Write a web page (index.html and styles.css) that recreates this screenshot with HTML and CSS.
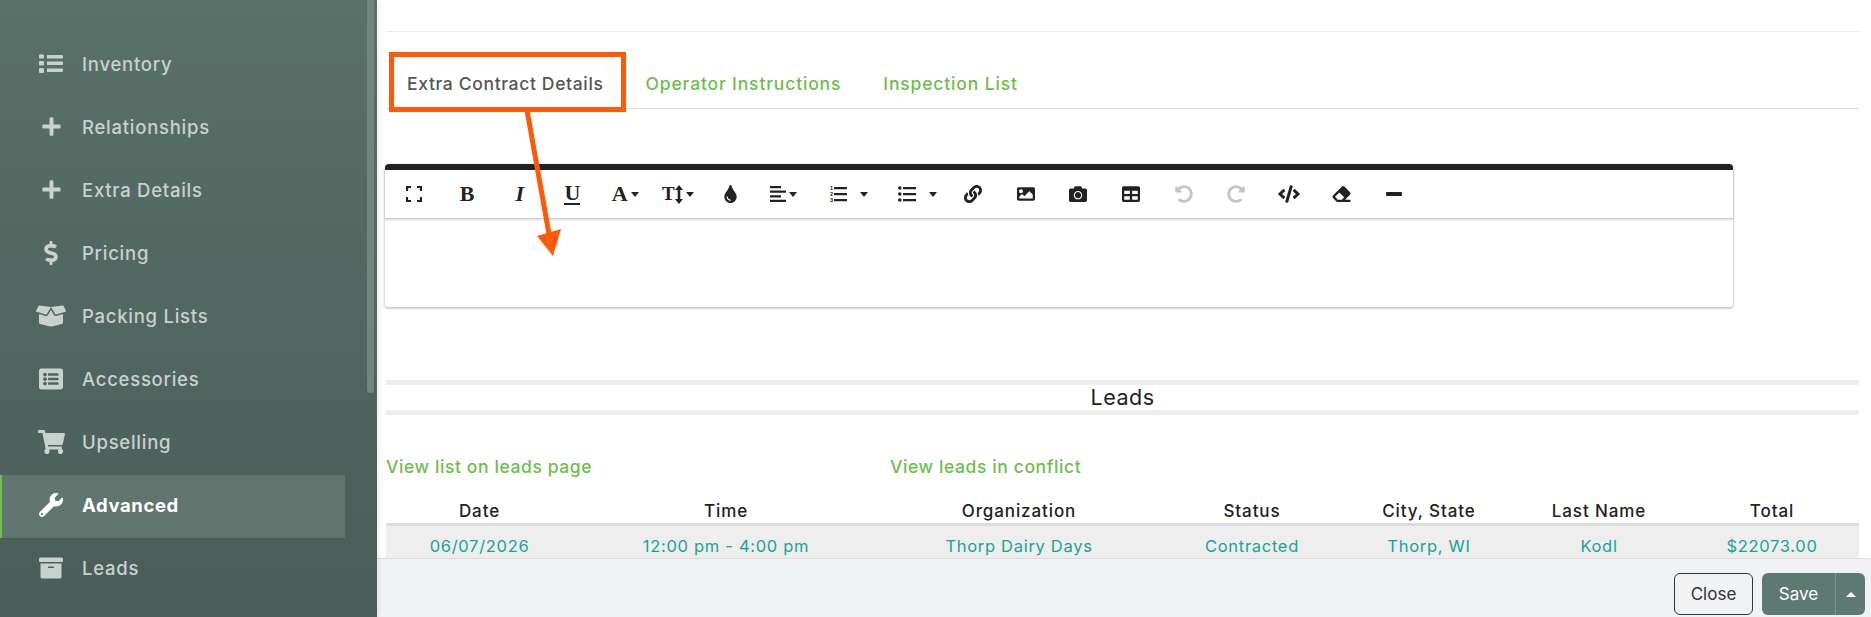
FILE: index.html
```html
<!doctype html>
<html lang="en">
<head>
	<meta charset="utf-8">
	<title>Extra Contract Details</title>
	<link rel="stylesheet" href="styles.css">
</head>
<body>
<div class="app">

	<!-- left menu -->
	<aside class="sidebar">
		<nav class="menu">
			<a class="menu-item" href="#"><span class="menu-icon"><svg width="24" height="19" viewBox="0 0 24 19"><path d="M0 1.5Q0 .5 1 .5h3q1 0 1 1v2q0 1-1 1H1q-1 0-1-1zM0 8Q0 7 1 7h3q1 0 1 1v2.500q0 1-1 1H1q-1 0-1-1zM0 15q0-1 1-1h3q1 0 1 1v3q0 1-1 1H1q-1 0-1-1zM8 1h15q1 0 1 1v1.500q0 1-1 1H8zM8 7.500h15q1 0 1 1V10q0 1-1 1H8zM8 14.500h15q1 0 1 1V17q0 1-1 1H8z"/></svg></span>Inventory</a>
			<a class="menu-item" href="#"><span class="menu-icon"><svg width="21" height="21" viewBox="0 0 448 512"><path d="M416 208H272V64c0-17.670-14.330-32-32-32h-32c-17.670 0-32 14.330-32 32v144H32c-17.670 0-32 14.330-32 32v32c0 17.670 14.330 32 32 32h144v144c0 17.670 14.330 32 32 32h32c17.670 0 32-14.330 32-32V304h144c17.670 0 32-14.330 32-32v-32c0-17.670-14.330-32-32-32z"/></svg></span>Relationships</a>
			<a class="menu-item" href="#"><span class="menu-icon"><svg width="21" height="21" viewBox="0 0 448 512"><path d="M416 208H272V64c0-17.670-14.330-32-32-32h-32c-17.670 0-32 14.330-32 32v144H32c-17.670 0-32 14.330-32 32v32c0 17.670 14.330 32 32 32h144v144c0 17.670 14.330 32 32 32h32c17.670 0 32-14.330 32-32V304h144c17.670 0 32-14.330 32-32v-32c0-17.670-14.330-32-32-32z"/></svg></span>Extra Details</a>
			<a class="menu-item" href="#"><span class="menu-icon"><svg width="14" height="24" viewBox="0 0 288 512"><path d="M209.200 233.400l-108-31.600C88.700 198.200 80 186.500 80 173.500c0-16.300 13.200-29.500 29.500-29.500h66.300c12.200 0 24.200 3.700 34.200 10.500 6.100 4.100 14.300 3.100 19.500-2l34.800-34c7.100-6.900 6.100-18.400-1.800-24.500C238 74.800 207.400 64.100 176 64V16c0-8.800-7.200-16-16-16h-32c-8.800 0-16 7.200-16 16v48h-2.500C45.800 64-5.400 118.700.5 183.600c4.200 46.100 39.400 83.600 83.800 96.600l102.500 30c12.500 3.700 21.200 15.300 21.200 28.300 0 16.300-13.200 29.500-29.500 29.500h-66.300C100 368 88 364.300 78 357.500c-6.100-4.100-14.300-3.100-19.500 2l-34.800 34c-7.100 6.900-6.100 18.400 1.800 24.500 24.500 19.200 55.100 29.900 86.500 30v48c0 8.800 7.200 16 16 16h32c8.800 0 16-7.200 16-16v-48.200c46.600-.9 90.300-28.600 105.700-72.700 21.500-61.600-14.600-124.800-72.500-141.700z"/></svg></span>Pricing</a>
			<a class="menu-item" href="#"><span class="menu-icon"><svg width="30" height="24" viewBox="0 0 640 512"><path d="M425.700 256c-16.900 0-32.800-9-41.400-23.400L320 126l-64.200 106.600c-8.700 14.500-24.600 23.500-41.500 23.500-4.500 0-9-.6-13.300-1.900L64 215v178c0 14.700 10 27.500 24.200 31l216.200 54.100c10.200 2.500 20.900 2.500 31 0L551.800 424c14.200-3.600 24.200-16.400 24.200-31V215l-137 39.100c-4.300 1.300-8.800 1.900-13.300 1.900zm212.600-112.200L586.800 41c-3.100-6.200-9.800-9.800-16.700-8.900L320 64l91.700 152.100c3.800 6.300 11.400 9.300 18.500 7.300l197.900-56.500c9.900-2.900 14.700-13.900 10.200-23.100zM53.200 41L1.700 143.800c-4.600 9.200.3 20.200 10.100 23l197.900 56.500c7.100 2 14.700-1 18.500-7.300L320 64 69.800 32.100c-6.900-.8-13.500 2.700-16.600 8.900z"/></svg></span>Packing Lists</a>
			<a class="menu-item" href="#"><span class="menu-icon"><svg width="24" height="24" viewBox="0 0 512 512"><path d="M464 480H48c-26.510 0-48-21.490-48-48V80c0-26.510 21.490-48 48-48h416c26.510 0 48 21.490 48 48v352c0 26.510-21.490 48-48 48zM128 120c-22.091 0-40 17.909-40 40s17.909 40 40 40 40-17.909 40-40-17.909-40-40-40zm0 96c-22.091 0-40 17.909-40 40s17.909 40 40 40 40-17.909 40-40-17.909-40-40-40zm0 96c-22.091 0-40 17.909-40 40s17.909 40 40 40 40-17.909 40-40-17.909-40-40-40zm288-136v-32c0-6.627-5.373-12-12-12H204c-6.627 0-12 5.373-12 12v32c0 6.627 5.373 12 12 12h200c6.627 0 12-5.373 12-12zm0 96v-32c0-6.627-5.373-12-12-12H204c-6.627 0-12 5.373-12 12v32c0 6.627 5.373 12 12 12h200c6.627 0 12-5.373 12-12zm0 96v-32c0-6.627-5.373-12-12-12H204c-6.627 0-12 5.373-12 12v32c0 6.627 5.373 12 12 12h200c6.627 0 12-5.373 12-12z"/></svg></span>Accessories</a>
			<a class="menu-item" href="#"><span class="menu-icon"><svg width="27" height="24" viewBox="0 0 576 512"><path d="M528.120 301.319l47.273-208C578.806 78.301 567.391 64 551.990 64H159.208l-9.166-44.810C147.758 8.021 137.930 0 126.529 0H24C10.745 0 0 10.745 0 24v16c0 13.255 10.745 24 24 24h69.883l70.248 343.435C147.325 417.100 136 435.222 136 456c0 30.928 25.072 56 56 56s56-25.072 56-56c0-15.674-6.447-29.835-16.824-40h209.647C430.447 426.165 424 440.326 424 456c0 30.928 25.072 56 56 56s56-25.072 56-56c0-22.172-12.888-41.332-31.579-50.405l5.517-24.276c3.413-15.018-8.002-29.319-23.403-29.319H218.117l-6.545-32h293.145c11.206 0 20.920-7.754 23.403-18.681z"/></svg></span>Upselling</a>
			<a class="menu-item active" href="#"><span class="menu-icon"><svg width="24" height="24" viewBox="0 0 512 512"><path d="M507.730 109.100c-2.240-9.030-13.540-12.090-20.120-5.510l-74.360 74.360-67.880-11.310-11.310-67.880 74.360-74.360c6.620-6.620 3.430-17.900-5.660-20.160-47.380-11.740-99.550.91-136.580 37.930-39.640 39.640-50.550 97.100-34.050 147.200L18.740 402.760c-24.990 24.990-24.990 65.510 0 90.500 24.990 24.990 65.510 24.990 90.500 0l213.210-213.210c50.120 16.710 107.470 5.680 147.370-34.220 37.070-37.070 49.700-89.320 37.910-136.730zM64 472c-13.250 0-24-10.750-24-24 0-13.260 10.750-24 24-24s24 10.740 24 24c0 13.250-10.750 24-24 24z"/></svg></span>Advanced</a>
			<a class="menu-item" href="#"><span class="menu-icon"><svg width="24" height="24" viewBox="0 0 512 512"><path d="M32 448c0 17.700 14.300 32 32 32h384c17.700 0 32-14.300 32-32V160H32v288zm160-212c0-6.600 5.400-12 12-12h104c6.600 0 12 5.400 12 12v8c0 6.600-5.400 12-12 12H204c-6.600 0-12-5.400-12-12v-8zM480 32H32C14.300 32 0 46.300 0 64v48c0 8.800 7.200 16 16 16h480c8.800 0 16-7.200 16-16V64c0-17.700-14.300-32-32-32z"/></svg></span>Leads</a>
		</nav>
		<div class="scroll-thumb"></div>
	</aside>

	<div class="main">
		<div class="content">
			<div class="top-rule"></div>

			<div class="tabs">
				<a class="tab active" href="#">Extra Contract Details</a>
				<a class="tab" href="#">Operator Instructions</a>
				<a class="tab" href="#">Inspection List</a>
			</div>

			<!-- editor -->
			<div class="editor">
				<div class="toolbar">
					<span class="tool"><svg width="16" height="16" viewBox="0 0 16 16"><path d="M1 5V1h4M11 1h4v4M15 11v4h-4M5 15H1v-4" fill="none" stroke="currentColor" stroke-width="2.200"/></svg></span>
					<span class="tool glyph">B</span>
					<span class="tool glyph slant">I</span>
					<span class="tool glyph"><span class="under">U</span></span>
					<span class="tool glyph">A<i class="caret"></i></span>
					<span class="tool glyph small">T<svg width="8" height="19" viewBox="0 0 8 19"><path d="M4 0l4 5H5.300v9H8l-4 5-4-5h2.700V5H0z"/></svg><i class="caret"></i></span>
					<span class="tool"><svg width="13" height="18" viewBox="0 0 352 512"><path d="M205.220 22.090c-7.940-28.780-49.440-30.120-58.440 0C100.010 179.850 0 222.720 0 333.910 0 432.350 78.720 512 176 512s176-79.650 176-178.090c0-111.750-99.790-153.340-146.780-311.820zM176 448c-61.750 0-112-50.250-112-112 0-8.840 7.160-16 16-16s16 7.160 16 16c0 44.110 35.890 80 80 80 8.840 0 16 7.160 16 16s-7.160 16-16 16z"/></svg></span>
					<span class="tool"><svg width="16" height="16" viewBox="0 0 16 16"><path d="M0 0h11v2.200H0zM0 4.600h16v2.200H0zM0 9.200h11v2.200H0zM0 13.800h16V16H0z"/></svg><i class="caret"></i></span>
					<span class="tool wide-ol"><span class="nums">1<br>2<br>3</span><svg width="13" height="16" viewBox="0 0 13 16"><path d="M0 1h13v2.200H0zM0 7h13v2.200H0zM0 13h13v2.200H0z"/></svg><i class="caret gap"></i></span>
					<span class="tool wide-ul"><svg width="18" height="16" viewBox="0 0 18 16"><circle cx="1.800" cy="2" r="1.800"/><circle cx="1.800" cy="8" r="1.800"/><circle cx="1.800" cy="14" r="1.800"/><path d="M5 1h13v2.200H5zM5 7h13v2.200H5zM5 13h13v2.200H5z"/></svg><i class="caret gap"></i></span>
					<span class="tool"><svg width="18" height="18" viewBox="0 0 512 512"><path d="M326.612 185.391c59.747 59.809 58.927 155.698.36 214.590-.11.12-.24.25-.36.37l-67.200 67.200c-59.270 59.270-155.699 59.262-214.960 0-59.270-59.260-59.270-155.700 0-214.960l37.106-37.106c9.840-9.840 26.786-3.300 27.294 10.606.648 17.722 3.826 35.527 9.690 52.721 1.986 5.822.567 12.262-3.783 16.612l-13.087 13.087c-28.026 28.026-28.905 73.660-1.155 101.960 28.024 28.579 74.086 28.749 102.325.51l67.200-67.190c28.191-28.191 28.073-73.757 0-101.830-3.701-3.694-7.429-6.564-10.341-8.569a16.037 16.037 0 0 1-6.947-12.606c-.396-10.567 3.348-21.456 11.698-29.806l21.054-21.055c5.521-5.521 14.182-6.199 20.584-1.731a152.482 152.482 0 0 1 20.522 17.197zM467.547 44.449c-59.261-59.262-155.690-59.270-214.960 0l-67.200 67.200c-.12.12-.25.25-.36.37-58.566 58.892-59.387 154.781.36 214.590a152.454 152.454 0 0 0 20.521 17.196c6.402 4.468 15.064 3.789 20.584-1.731l21.054-21.055c8.350-8.350 12.094-19.239 11.698-29.806a16.037 16.037 0 0 0-6.947-12.606c-2.912-2.005-6.640-4.875-10.341-8.569-28.073-28.073-28.191-73.639 0-101.830l67.200-67.190c28.239-28.239 74.300-28.069 102.325.51 27.750 28.300 26.872 73.934-1.155 101.960l-13.087 13.087c-4.350 4.350-5.769 10.790-3.783 16.612 5.864 17.194 9.042 34.999 9.690 52.721.509 13.906 17.454 20.446 27.294 10.606l37.106-37.106c59.271-59.259 59.271-155.699.001-214.959z"/></svg></span>
					<span class="tool"><svg width="18" height="18" viewBox="0 0 512 512"><path d="M464 448H48c-26.510 0-48-21.490-48-48V112c0-26.510 21.490-48 48-48h416c26.510 0 48 21.490 48 48v288c0 26.510-21.490 48-48 48zM112 120c-30.928 0-56 25.072-56 56s25.072 56 56 56 56-25.072 56-56-25.072-56-56-56zM64 384h384V272l-87.515-87.515c-4.686-4.686-12.284-4.686-16.971 0L208 320l-55.515-55.515c-4.686-4.686-12.284-4.686-16.971 0L64 336v48z"/></svg></span>
					<span class="tool"><svg width="18" height="18" viewBox="0 0 512 512"><path d="M512 144v288c0 26.500-21.500 48-48 48H48c-26.500 0-48-21.500-48-48V144c0-26.500 21.500-48 48-48h88l12.300-32.900c7-18.700 24.900-31.100 44.900-31.100h125.500c20 0 37.900 12.400 44.900 31.100L376 96h88c26.500 0 48 21.500 48 48zM376 288c0-66.200-53.800-120-120-120s-120 53.800-120 120 53.800 120 120 120 120-53.800 120-120zm-32 0c0 48.500-39.500 88-88 88s-88-39.500-88-88 39.500-88 88-88 88 39.500 88 88z"/></svg></span>
					<span class="tool"><svg width="18" height="18" viewBox="0 0 512 512"><path d="M464 32H48C21.490 32 0 53.490 0 80v352c0 26.510 21.490 48 48 48h416c26.510 0 48-21.490 48-48V80c0-26.510-21.490-48-48-48zM224 416H64v-96h160v96zm0-160H64v-96h160v96zm224 160H288v-96h160v96zm0-160H288v-96h160v96z"/></svg></span>
					<span class="tool off"><svg width="18" height="18" viewBox="0 0 512 512"><path d="M255.545 8c-66.269.119-126.438 26.233-170.860 68.685L48.971 40.971C33.851 25.851 8 36.559 8 57.941V192c0 13.255 10.745 24 24 24h134.059c21.382 0 32.090-25.851 16.971-40.971l-41.750-41.750c30.864-28.899 70.801-44.907 113.230-45.273 92.398-.798 170.283 73.977 169.484 169.442C423.236 348.009 349.816 424 256 424c-41.127 0-79.997-14.678-110.630-41.556-4.743-4.161-11.906-3.908-16.368.553L89.384 422.615c-4.868 4.868-4.628 12.805.482 17.419C133.798 479.702 192.182 504 256 504c136.966 0 247.999-111.033 248-247.998C504.001 119.193 392.354 7.755 255.545 8z"/></svg></span>
					<span class="tool off"><svg class="flip" width="18" height="18" viewBox="0 0 512 512"><path d="M255.545 8c-66.269.119-126.438 26.233-170.860 68.685L48.971 40.971C33.851 25.851 8 36.559 8 57.941V192c0 13.255 10.745 24 24 24h134.059c21.382 0 32.090-25.851 16.971-40.971l-41.750-41.750c30.864-28.899 70.801-44.907 113.230-45.273 92.398-.798 170.283 73.977 169.484 169.442C423.236 348.009 349.816 424 256 424c-41.127 0-79.997-14.678-110.630-41.556-4.743-4.161-11.906-3.908-16.368.553L89.384 422.615c-4.868 4.868-4.628 12.805.482 17.419C133.798 479.702 192.182 504 256 504c136.966 0 247.999-111.033 248-247.998C504.001 119.193 392.354 7.755 255.545 8z"/></svg></span>
					<span class="tool"><svg width="22" height="18" viewBox="0 0 640 512"><path d="M278.900 511.500l-61-17.700c-6.400-1.800-10-8.500-8.200-14.900L346.200 8.700c1.800-6.400 8.500-10 14.900-8.200l61 17.700c6.400 1.800 10 8.500 8.200 14.900L293.800 503.300c-1.900 6.400-8.500 10.100-14.900 8.200zm-114-112.200l43.500-46.400c4.600-4.900 4.300-12.700-.8-17.200L117 256l90.600-79.700c5.100-4.500 5.500-12.300.8-17.200l-43.500-46.400c-4.500-4.800-12.100-5.100-17-.5L3.800 247.200c-5.100 4.700-5.100 12.800 0 17.500l144.100 135.100c4.900 4.600 12.500 4.400 17-.5zm327.200.6l144.100-135.100c5.100-4.700 5.100-12.800 0-17.500L492.100 112.100c-4.800-4.500-12.400-4.300-17 .5L431.600 159c-4.600 4.900-4.300 12.700.8 17.200L523 256l-90.600 79.700c-5.100 4.500-5.500 12.300-.8 17.200l43.500 46.400c4.500 4.900 12.100 5.100 17 .6z"/></svg></span>
					<span class="tool"><svg width="19" height="18" viewBox="0 0 512 512"><path d="M497.941 273.941c18.745-18.745 18.745-49.137 0-67.882l-160-160c-18.745-18.745-49.136-18.746-67.883 0l-256 256c-18.745 18.745-18.745 49.137 0 67.882l96 96A48.004 48.004 0 0 0 144 480h356c6.627 0 12-5.373 12-12v-40c0-6.627-5.373-12-12-12H355.883l142.058-142.059zm-302.627-62.627l137.373 137.373L265.373 416H150.628l-80-80 124.686-124.686z"/></svg></span>
					<span class="tool"><svg width="16" height="4" viewBox="0 0 16 4"><rect width="16" height="4" rx="1"/></svg></span>
				</div>
				<div class="editor-body"></div>
			</div>

			<!-- leads -->
			<h2 class="section-title">Leads</h2>
			<div class="lead-links">
				<a class="lead-link first" href="#">View list on leads page</a>
				<a class="lead-link" href="#">View leads in conflict</a>
			</div>
			<table class="leads">
				<thead>
					<tr>
						<th class="c-date">Date</th>
						<th class="c-time">Time</th>
						<th class="c-org">Organization</th>
						<th class="c-status">Status</th>
						<th class="c-city">City, State</th>
						<th class="c-name">Last Name</th>
						<th class="c-total">Total</th>
					</tr>
				</thead>
				<tbody>
					<tr>
						<td>06/07/2026</td>
						<td>12:00 pm - 4:00 pm</td>
						<td>Thorp Dairy Days</td>
						<td>Contracted</td>
						<td>Thorp, WI</td>
						<td>Kodl</td>
						<td>$22073.00</td>
					</tr>
				</tbody>
			</table>
		</div>

		<div class="footer">
			<button class="btn-close">Close</button>
			<div class="btn-save">
				<span class="save-label">Save</span>
				<span class="save-more"><i class="caret-up"></i></span>
			</div>
		</div>
	</div>
</div>

<!-- orange annotation over the page -->
<div class="mark-box"></div>
<svg class="mark-arrow" width="50" height="150" viewBox="0 0 50 150"><path d="M7 0l22 124" stroke="#ff5a0a" stroke-width="5" fill="none"/><path d="M17 126l24-7-8 27z" fill="#ff5a0a"/></svg>
</body>
</html>
```

FILE: styles.css
```css
*{
	box-sizing: border-box;
}
html,body{
	margin: 0;
	padding: 0;
	height: 617px;
	overflow: hidden;
	background: #fff;
	font-family: "Inter", "Open Sans", sans-serif;
	color: #222;
}
a{
	text-decoration: none;
}
.app{
	display: flex;
	height: 617px;
}

/* sidebar */
.sidebar{
	position: relative;
	z-index: 2;
	flex: 0 0 377px;
	background: linear-gradient(#587169, #4a5d59);
	box-shadow: 0 0 8px rgba(0,0,0,.12);
}
.menu{
	display: flex;
	flex-direction: column;
	width: 345px;
	padding-top: 34px;
}
.menu-item{
	display: flex;
	align-items: center;
	height: 63px;
	padding-left: 26px;
	padding-bottom: 4px;
	font-size: 18.500px;
	font-weight: 500;
	letter-spacing: .75px;
	color: #c9d1cf;
}
.menu-item.active{
	background: #61756f;
	border-left: 2px solid #6cbf4b;
	padding-left: 24px;
	color: #fff;
	font-weight: 700;
	letter-spacing: .6px;
}
.menu-icon{
	display: flex;
	justify-content: center;
	width: 50px;
	margin-right: 6px;
}
.menu-icon svg{
	fill: currentColor;
}
.scroll-thumb{
	position: absolute;
	top: 0;
	right: 3px;
	width: 7px;
	height: 393px;
	border-radius: 0 0 4px 4px;
	background: #728680;
}

/* main column */
.main{
	flex: 1;
	display: flex;
	flex-direction: column;
	min-width: 0;
}
.content{
	height: 558px;
	overflow: hidden;
	padding: 0 12px 0 9px;
}
.top-rule{
	height: 32px;
	border-bottom: 1px solid #eaeaea;
}

/* tabs */
.tabs{
	display: flex;
	margin-top: 25px;
	height: 52px;
	border-bottom: 1px solid #dfdfdf;
}
.tab{
	display: flex;
	align-items: center;
	height: 51px;
	padding: 2px 21px 0;
	font-size: 17.500px;
	font-weight: 500;
	letter-spacing: .85px;
	color: #6cbf4b;
}
.tab.active{
	color: #555;
	letter-spacing: .65px;
}

/* editor */
.editor{
	margin-top: 55px;
	margin-left: -1px;
	height: 143px;
	width: 1348px;
	border-top: 6px solid #222;
	border-radius: 4px 4px 3px 3px;
	background: #fff;
	box-shadow: 0 1px 3px rgba(0,0,0,.35);
}
.toolbar{
	display: flex;
	align-items: center;
	height: 49px;
	padding-left: 3px;
	border-bottom: 1px solid #ccc;
	box-shadow: 0 1px 2px rgba(0,0,0,.15);
	color: #222;
}
.tool{
	display: flex;
	align-items: center;
	justify-content: center;
	flex: 0 0 52.700px;
	height: 100%;
}
.tool svg{
	fill: currentColor;
}
.tool.wide-ol{
	flex-basis: 79px;
}
.tool.wide-ul{
	flex-basis: 58px;
}
.tool.off{
	color: #c4c4c4;
}
.glyph{
	font-family: "Liberation Serif", serif;
	font-size: 22px;
	font-weight: 700;
}
.glyph.small{
	font-size: 19px;
}
.slant{
	font-style: italic;
}
.under{
	border-bottom: 2px solid #222;
	line-height: 20px;
}
.caret{
	display: inline-block;
	margin-left: 3px;
	border-top: 5px solid #222;
	border-left: 4.500px solid transparent;
	border-right: 4.500px solid transparent;
}
.caret.gap{
	margin-left: 13px;
}
.nums{
	font-family: "Liberation Sans", sans-serif;
	font-size: 5.500px;
	line-height: 6px;
	font-weight: 700;
	margin-right: 1px;
}

/* leads */
.section-title{
	margin: 73px 0 0;
	height: 35px;
	line-height: 25px;
	border-top: 5px solid #eee;
	border-bottom: 5px solid #eee;
	text-align: center;
	font-size: 21.500px;
	font-weight: 400;
	letter-spacing: .5px;
	color: #222;
}
.lead-links{
	display: flex;
	align-items: center;
	margin-top: 40px;
	height: 22px;
}
.lead-link{
	font-size: 17.500px;
	font-weight: 500;
	letter-spacing: .6px;
	color: #6cbf4b;
}
.lead-link.first{
	width: 504px;
}
.leads{
	width: 1473px;
	margin-top: 23px;
	border-collapse: collapse;
	table-layout: fixed;
	font-size: 16.500px;
	text-align: center;
}
.leads th{
	height: 24px;
	padding: 0;
	font-size: 17px;
	font-weight: 500;
	letter-spacing: .9px;
	border-bottom: 3px solid #ddd;
}
.leads td{
	height: 44px;
	padding: 0 0 1px;
	background: #eee;
	color: #17a398;
	letter-spacing: .7px;
}
.c-date{ width: 187px; }
.c-time{ width: 306px; }
.c-org{ width: 280px; }
.c-status{ width: 186px; }
.c-city{ width: 168px; }
.c-name{ width: 172px; }
.c-total{ width: 174px; }

/* footer */
.footer{
	flex: 1;
	display: flex;
	justify-content: flex-end;
	gap: 9px;
	padding: 14px 6px 0 0;
	border-top: 1px solid #ddd;
	background: #f1f2f4;
	font-size: 17px;
}
.btn-close{
	width: 79px;
	height: 42px;
	border: 1px solid #333;
	border-radius: 6px;
	background: transparent;
	font: inherit;
	color: #333;
}
.btn-save{
	display: flex;
	width: 103px;
	height: 42px;
	border-radius: 6px;
	background: #5d7a72;
	color: #fff;
}
.save-label{
	flex: 1;
	line-height: 42px;
	text-align: center;
}
.save-more{
	display: flex;
	align-items: center;
	justify-content: center;
	width: 30px;
	border-left: 1px solid #7d958e;
}
.caret-up{
	border-bottom: 5px solid #fff;
	border-left: 5px solid transparent;
	border-right: 5px solid transparent;
}

/* annotation */
.mark-box{
	position: absolute;
	left: 389px;
	top: 52px;
	width: 237px;
	height: 60px;
	border: 5px solid #ff5a0a;
}
.mark-arrow{
	position: absolute;
	left: 520px;
	top: 110px;
}
.flip{
	transform: scaleX(-1);
}
```
